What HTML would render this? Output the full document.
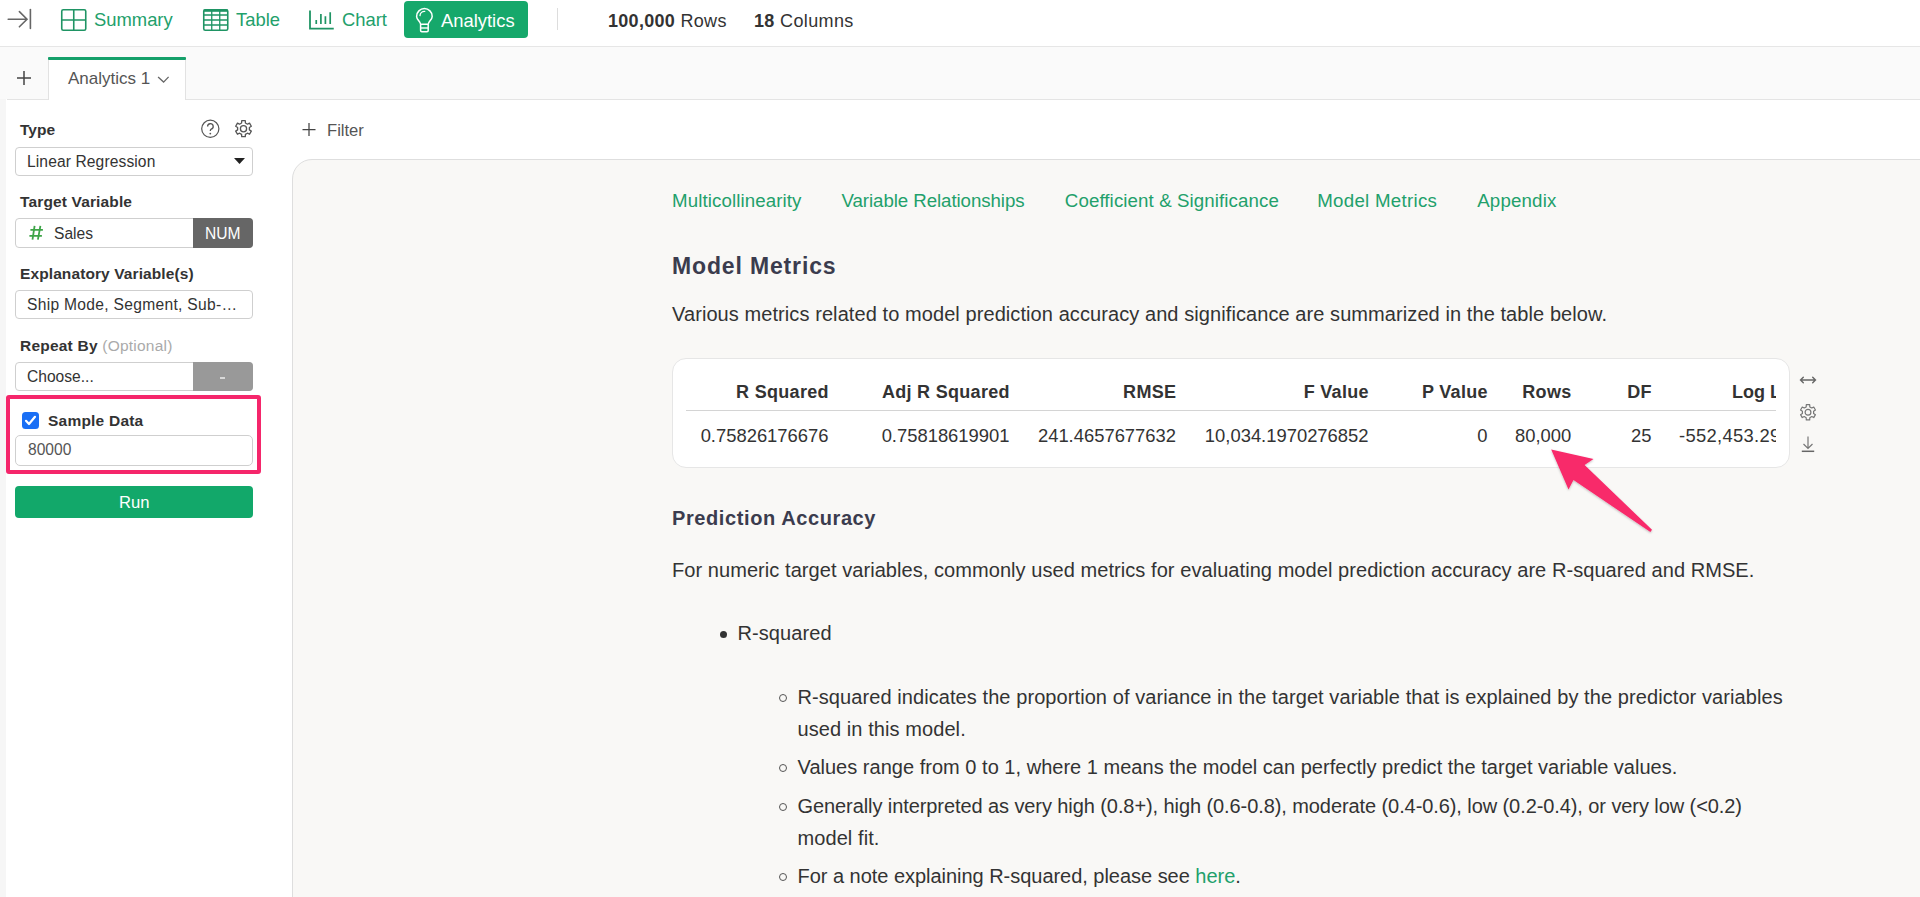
<!DOCTYPE html>
<html><head><meta charset="utf-8"><style>
html,body{-webkit-font-smoothing:antialiased;margin:0;padding:0;width:1920px;height:897px;overflow:hidden;background:#fff;position:relative;font-family:"Liberation Sans",sans-serif}
.t{position:absolute;white-space:nowrap}
.box{position:absolute;border:1px solid #cfcfcf;border-radius:4px;box-sizing:border-box;background:#fff}
</style></head><body>
<div style="position:absolute;left:0;top:0;width:1920px;height:46px;background:#fff;border-bottom:1px solid #e6e6e6"></div>
<svg style="position:absolute;left:0px;top:0px" width="40" height="40" viewBox="0 0 40 40">
<path d="M8.2 19.2H26.8M19.4 11.6L27 19.2L19.4 26.8" fill="none" stroke="#666" stroke-width="1.6" stroke-linecap="round"/>
<path d="M30.4 9.6V28.4" stroke="#666" stroke-width="1.6" stroke-linecap="round"/></svg>
<svg style="position:absolute;left:60px;top:8px" width="28" height="24" viewBox="0 0 28 24">
<rect x="1.75" y="1.75" width="24" height="20.5" rx="1.5" fill="none" stroke="#1f9464" stroke-width="1.6"/>
<path d="M13.75 1.75V22.25M1.75 12H25.75" stroke="#1f9464" stroke-width="1.6"/></svg>
<div class="t" style="left:94px;top:8.92px;font-size:18.4px;line-height:21px;color:#22a06b;font-weight:normal;letter-spacing:0px;">Summary</div>
<svg style="position:absolute;left:202px;top:8px" width="28" height="24" viewBox="0 0 28 24">
<rect x="1.75" y="1.75" width="24" height="20.5" rx="1.5" fill="none" stroke="#1f9464" stroke-width="1.6"/>
<path d="M1.75 2.6H25.75" stroke="#1f9464" stroke-width="2.4"/>
<path d="M9.75 1.75V22.25M17.75 1.75V22.25M1.75 7H25.75M1.75 12H25.75M1.75 17H25.75" stroke="#1f9464" stroke-width="1.3"/></svg>
<div class="t" style="left:236px;top:9.42px;font-size:18.4px;line-height:21px;color:#22a06b;font-weight:normal;letter-spacing:0px;">Table</div>
<svg style="position:absolute;left:308px;top:9px" width="28" height="22" viewBox="0 0 28 22">
<path d="M2 1.6V19.6H25.75" fill="none" stroke="#1f9464" stroke-width="1.8"/>
<path d="M8.25 10.9V15M12.9 5V15M17.4 7.3V15M22.2 3.2V15" stroke="#1f9464" stroke-width="1.7"/></svg>
<div class="t" style="left:342px;top:9.42px;font-size:18.4px;line-height:21px;color:#22a06b;font-weight:normal;letter-spacing:0px;">Chart</div>
<div style="position:absolute;left:404px;top:1px;width:124px;height:37px;background:#16a86b;border-radius:4px"></div>
<svg style="position:absolute;left:414px;top:6px" width="21" height="28" viewBox="0 0 21 28">
<path d="M6.6 18.2C6.6 15.6 2.6 13.6 2.6 10.4A7.8 7.8 0 0 1 18.2 10.4C18.2 13.6 14.2 15.6 14.2 18.2Z" fill="none" stroke="#fff" stroke-width="1.5" stroke-linejoin="round"/>
<path d="M6.6 18.2V24.6Q6.6 25.8 7.8 25.8H13Q14.2 25.8 14.2 24.6V18.2" fill="none" stroke="#fff" stroke-width="1.5"/>
<path d="M6.6 22H14.2" stroke="#fff" stroke-width="1.4"/>
<path d="M6 9.6A4.6 4.6 0 0 1 10.8 5.3" fill="none" stroke="#fff" stroke-width="1.3" stroke-linecap="round"/></svg>
<div class="t" style="left:441px;top:9.82px;font-size:18.4px;line-height:21px;color:#fff;font-weight:normal;letter-spacing:0px;">Analytics</div>
<div style="position:absolute;left:557px;top:8px;width:1px;height:22px;background:#ddd"></div>
<div class="t" style="left:608px;top:11.36px;font-size:18px;line-height:21px;color:#333;font-weight:normal;letter-spacing:0.3px;"><b>100,000</b> Rows</div>
<div class="t" style="left:754px;top:11.36px;font-size:18px;line-height:21px;color:#333;font-weight:normal;letter-spacing:0.36px;"><b>18</b> Columns</div>
<div style="position:absolute;left:0;top:47px;width:1920px;height:52px;background:#fafafa"></div>
<div style="position:absolute;left:7px;top:99px;width:1913px;height:1px;background:#e4e4e4"></div>
<div style="position:absolute;left:0;top:99px;width:6px;height:798px;background:#f6f6f6"></div>
<svg style="position:absolute;left:16px;top:70px" width="16" height="16" viewBox="0 0 16 16"><path d="M8 1V15M1 8H15" stroke="#444" stroke-width="1.5"/></svg>
<div style="position:absolute;left:48px;top:57px;width:138px;height:43px;background:#fff;border-left:1px solid #e2e2e2;border-right:1px solid #e2e2e2;box-sizing:border-box"></div>
<div style="position:absolute;left:48px;top:57px;width:138px;height:3px;background:#15a06a;border-radius:1px"></div>
<div class="t" style="left:68px;top:69.01px;font-size:17px;line-height:20px;color:#555;font-weight:normal;letter-spacing:0px;">Analytics 1</div>
<svg style="position:absolute;left:157px;top:75px" width="14" height="9" viewBox="0 0 14 9"><path d="M1.1 2L6.6 7.1L11.6 1.9" fill="none" stroke="#666" stroke-width="1.3"/></svg>
<div style="position:absolute;left:6px;top:100px;width:286px;height:797px;background:#fff"></div>
<div class="t" style="left:20px;top:121.43px;font-size:15.5px;line-height:18px;color:#333;font-weight:bold;letter-spacing:0px;">Type</div>
<svg style="position:absolute;left:200px;top:119px" width="21" height="20" viewBox="0 0 21 20">
<circle cx="10.3" cy="9.8" r="8.6" fill="none" stroke="#555" stroke-width="1.2"/>
<path d="M7.6 7.5A2.8 2.8 0 1 1 11.2 10.2C10.4 10.6 10.3 11 10.3 12" fill="none" stroke="#555" stroke-width="1.3"/>
<circle cx="10.3" cy="14.6" r="0.9" fill="#555"/></svg>
<svg style="position:absolute;left:233px;top:118px" width="22" height="22" viewBox="0 0 22 22">
<path fill="none" stroke="#555" stroke-width="1.3" stroke-linejoin="round" d="M8.59 5.01L8.71 2.70L12.29 2.70L12.41 5.01L14.47 6.20L16.54 5.15L18.32 8.25L16.38 9.51L16.38 11.89L18.32 13.15L16.54 16.25L14.47 15.20L12.41 16.39L12.29 18.70L8.71 18.70L8.59 16.39L6.53 15.20L4.46 16.25L2.68 13.15L4.62 11.89L4.62 9.51L2.68 8.25L4.46 5.15L6.53 6.20Z"/>
<circle cx="10.5" cy="10.7" r="3.1" fill="none" stroke="#555" stroke-width="1.3"/></svg>
<div class="box" style="left:15px;top:147px;width:238px;height:29px"></div>
<div class="t" style="left:27px;top:152.59px;font-size:15.6px;line-height:18px;color:#333;font-weight:normal;letter-spacing:0.11px;">Linear Regression</div>
<svg style="position:absolute;left:234px;top:158px" width="11" height="6" viewBox="0 0 11 6"><path d="M0 0H11L5.5 6Z" fill="#222"/></svg>
<div class="t" style="left:20px;top:193.13px;font-size:15.5px;line-height:18px;color:#333;font-weight:bold;letter-spacing:0.14px;">Target Variable</div>
<div class="box" style="left:15px;top:218px;width:238px;height:30px"></div>
<div style="position:absolute;left:193px;top:218px;width:60px;height:30px;background:#666;border-radius:0 4px 4px 0"></div>
<svg style="position:absolute;left:28px;top:224px" width="16" height="16" viewBox="0 0 16 16"><path d="M6.6 1.8L4.5 15.6M12.4 1.8L9.9 15.6M2.4 5.8H14.9M1.4 11.8H13.9" fill="none" stroke="#3da447" stroke-width="1.8"/></svg>
<div class="t" style="left:54px;top:224.59px;font-size:15.6px;line-height:18px;color:#333;font-weight:normal;letter-spacing:0px;">Sales</div>
<div class="t" style="left:205px;top:224.59px;font-size:15.6px;line-height:18px;color:#fff;font-weight:normal;letter-spacing:0px;">NUM</div>
<div class="t" style="left:20px;top:265.33px;font-size:15.5px;line-height:18px;color:#333;font-weight:bold;letter-spacing:0.1px;">Explanatory Variable(s)</div>
<div class="box" style="left:15px;top:290px;width:238px;height:29px"></div>
<div class="t" style="left:27px;top:295.99px;font-size:15.6px;line-height:18px;color:#333;font-weight:normal;letter-spacing:0.3px;">Ship Mode, Segment, Sub-…</div>
<div class="t" style="left:20px;top:336.63px;font-size:15.5px;line-height:18px;color:#333;font-weight:bold;letter-spacing:0.22px;">Repeat By <span style="font-weight:normal;color:#aaa">(Optional)</span></div>
<div class="box" style="left:15px;top:362px;width:238px;height:29px"></div>
<div style="position:absolute;left:193px;top:362px;width:60px;height:29px;background:#999;border-radius:0 4px 4px 0"></div>
<div style="position:absolute;left:220px;top:377px;width:5px;height:1.5px;background:#d8d8d8"></div>
<div class="t" style="left:27px;top:367.79px;font-size:15.6px;line-height:18px;color:#333;font-weight:normal;letter-spacing:0px;">Choose...</div>
<div style="position:absolute;left:6px;top:395px;width:255px;height:79px;border:4px solid #f5266b;border-radius:3px;box-sizing:border-box"></div>
<div style="position:absolute;left:21.5px;top:411.5px;width:17px;height:17px;background:#1a6ff5;border-radius:3.5px"></div>
<svg style="position:absolute;left:21.5px;top:411.5px" width="17" height="17" viewBox="0 0 17 17"><path d="M4 8.8L7 12L13 4.8" fill="none" stroke="#fff" stroke-width="2.2" stroke-linecap="round" stroke-linejoin="round"/></svg>
<div class="t" style="left:48px;top:411.53px;font-size:15.5px;line-height:18px;color:#333;font-weight:bold;letter-spacing:0.22px;">Sample Data</div>
<div class="box" style="left:15px;top:435px;width:238px;height:31px;border-radius:5px"></div>
<div class="t" style="left:28px;top:441.19px;font-size:15.6px;line-height:18px;color:#555;font-weight:normal;letter-spacing:0px;">80000</div>
<div style="position:absolute;left:15px;top:486px;width:238px;height:32px;background:#12a86a;border-radius:4px"></div>
<div class="t" style="left:119px;top:493.05px;font-size:16.6px;line-height:19px;color:#fff;font-weight:normal;letter-spacing:0px;">Run</div>
<svg style="position:absolute;left:301px;top:122px" width="16" height="15" viewBox="0 0 16 15"><path d="M8 1V14M1.5 7.5H14.5" stroke="#444" stroke-width="1.25"/></svg>
<div class="t" style="left:327px;top:120.55px;font-size:16.6px;line-height:19px;color:#555;font-weight:normal;letter-spacing:0px;">Filter</div>
<div style="position:absolute;left:292px;top:159px;width:1640px;height:760px;background:#f9f8f6;border:1px solid #dedede;border-top-left-radius:20px;box-sizing:border-box"></div>
<div class="t" style="left:672px;top:190.02px;font-size:18.7px;line-height:22px;color:#22a06b;font-weight:normal;letter-spacing:0.1px;">Multicollinearity</div>
<div class="t" style="left:841.5px;top:190.02px;font-size:18.7px;line-height:22px;color:#22a06b;font-weight:normal;letter-spacing:-0.07px;">Variable Relationships</div>
<div class="t" style="left:1064.8px;top:190.02px;font-size:18.7px;line-height:22px;color:#22a06b;font-weight:normal;letter-spacing:0.1px;">Coefficient &amp; Significance</div>
<div class="t" style="left:1317.2px;top:190.02px;font-size:18.7px;line-height:22px;color:#22a06b;font-weight:normal;letter-spacing:0.28px;">Model Metrics</div>
<div class="t" style="left:1477.2px;top:190.02px;font-size:18.7px;line-height:22px;color:#22a06b;font-weight:normal;letter-spacing:0.17px;">Appendix</div>
<div class="t" style="left:672px;top:252.78px;font-size:23px;line-height:26px;color:#3b3c4e;font-weight:bold;letter-spacing:0.85px;">Model Metrics</div>
<div class="t" style="left:672px;top:303.27px;font-size:20px;line-height:23px;color:#333;font-weight:normal;letter-spacing:0.08px;">Various metrics related to model prediction accuracy and significance are summarized in the table below.</div>
<div style="position:absolute;left:672px;top:358px;width:1118px;height:110px;background:#fff;border:1px solid #e6e6e6;border-radius:14px;box-sizing:border-box"></div>
<div style="position:absolute;left:686px;top:410px;width:1090px;height:1px;background:#d4d4d4"></div>
<div class="t" style="left:0px;top:381.86px;font-size:18px;line-height:21px;color:#333;font-weight:bold;letter-spacing:0.3px;width:828.8px;text-align:right">R Squared</div>
<div class="t" style="left:0px;top:424.72px;font-size:18.4px;line-height:21px;color:#333;font-weight:normal;letter-spacing:0px;width:828.5px;text-align:right">0.75826176676</div>
<div class="t" style="left:0px;top:381.86px;font-size:18px;line-height:21px;color:#333;font-weight:bold;letter-spacing:0.3px;width:1009.8px;text-align:right">Adj R Squared</div>
<div class="t" style="left:0px;top:424.72px;font-size:18.4px;line-height:21px;color:#333;font-weight:normal;letter-spacing:0px;width:1009.5px;text-align:right">0.75818619901</div>
<div class="t" style="left:0px;top:381.86px;font-size:18px;line-height:21px;color:#333;font-weight:bold;letter-spacing:0.3px;width:1176.3px;text-align:right">RMSE</div>
<div class="t" style="left:0px;top:424.72px;font-size:18.4px;line-height:21px;color:#333;font-weight:normal;letter-spacing:0px;width:1176px;text-align:right">241.4657677632</div>
<div class="t" style="left:0px;top:381.86px;font-size:18px;line-height:21px;color:#333;font-weight:bold;letter-spacing:0.3px;width:1368.8px;text-align:right">F Value</div>
<div class="t" style="left:0px;top:424.72px;font-size:18.4px;line-height:21px;color:#333;font-weight:normal;letter-spacing:0px;width:1368.5px;text-align:right">10,034.1970276852</div>
<div class="t" style="left:0px;top:381.86px;font-size:18px;line-height:21px;color:#333;font-weight:bold;letter-spacing:0.3px;width:1487.8px;text-align:right">P Value</div>
<div class="t" style="left:0px;top:424.72px;font-size:18.4px;line-height:21px;color:#333;font-weight:normal;letter-spacing:0px;width:1487.5px;text-align:right">0</div>
<div class="t" style="left:0px;top:381.86px;font-size:18px;line-height:21px;color:#333;font-weight:bold;letter-spacing:0.3px;width:1571.5px;text-align:right">Rows</div>
<div class="t" style="left:0px;top:424.72px;font-size:18.4px;line-height:21px;color:#333;font-weight:normal;letter-spacing:0px;width:1571.2px;text-align:right">80,000</div>
<div class="t" style="left:0px;top:381.86px;font-size:18px;line-height:21px;color:#333;font-weight:bold;letter-spacing:0.3px;width:1651.8px;text-align:right">DF</div>
<div class="t" style="left:0px;top:424.72px;font-size:18.4px;line-height:21px;color:#333;font-weight:normal;letter-spacing:0px;width:1651.5px;text-align:right">25</div>
<div style="position:absolute;left:1660px;top:0px;width:116px;height:500px;overflow:hidden">
<div class="t" style="left:72px;top:381.86px;font-size:18px;line-height:21px;color:#333;font-weight:bold;letter-spacing:0px;">Log Likelihood</div>
<div class="t" style="left:19px;top:424.72px;font-size:18.4px;line-height:21px;color:#333;font-weight:normal;letter-spacing:0.3px;">-552,453.2915</div>
</div>
<svg style="position:absolute;left:1798px;top:373px" width="20" height="14" viewBox="0 0 20 14">
<path d="M2.5 7H17.5M5.3 4.2L2.5 7L5.3 9.8M14.7 4.2L17.5 7L14.7 9.8" fill="none" stroke="#666" stroke-width="1.4" stroke-linecap="round"/></svg>
<svg style="position:absolute;left:1797px;top:401px" width="22" height="22" viewBox="0 0 22 22">
<path fill="none" stroke="#777" stroke-width="1.2" stroke-linejoin="round" d="M9.18 5.90L9.30 3.69L12.70 3.69L12.82 5.90L14.77 7.02L16.74 6.02L18.44 8.97L16.59 10.17L16.59 12.43L18.44 13.63L16.74 16.58L14.77 15.58L12.82 16.70L12.70 18.91L9.30 18.91L9.18 16.70L7.23 15.58L5.26 16.58L3.56 13.63L5.41 12.43L5.41 10.17L3.56 8.97L5.26 6.02L7.23 7.02Z"/>
<circle cx="11" cy="11.3" r="2.9" fill="none" stroke="#777" stroke-width="1.2"/></svg>
<svg style="position:absolute;left:1800px;top:435px" width="16" height="18" viewBox="0 0 16 18">
<path d="M8 1.5V13.5M3.5 9L8 13.5L12.5 9" fill="none" stroke="#777" stroke-width="1.2"/><path d="M1.8 16.3H14.2" stroke="#666" stroke-width="1.5"/></svg>
<svg style="position:absolute;left:0;top:0;overflow:visible" width="1920" height="897">
<defs><filter id="sh" x="-20%" y="-20%" width="140%" height="140%"><feDropShadow dx="0" dy="1" stdDeviation="1" flood-color="#000" flood-opacity="0.25"/></filter></defs>
<path filter="url(#sh)" d="M1551.2 449.5L1593.5 459L1584.6 465.1L1652 529.7L1650.4 532L1573.5 480.1L1568.5 489.6Z" fill="#f8296b"/></svg>
<div class="t" style="left:672px;top:506.87px;font-size:20px;line-height:23px;color:#3b3c4e;font-weight:bold;letter-spacing:0.6px;">Prediction Accuracy</div>
<div class="t" style="left:672px;top:558.55px;font-size:20.05px;line-height:23px;color:#333;font-weight:normal;letter-spacing:0.05px;">For numeric target variables, commonly used metrics for evaluating model prediction accuracy are R-squared and RMSE.</div>
<div style="position:absolute;left:719.5px;top:630.5px;width:7px;height:7px;border-radius:50%;background:#333"></div>
<div class="t" style="left:737.5px;top:622.37px;font-size:20px;line-height:23px;color:#333;font-weight:normal;letter-spacing:0.08px;">R-squared</div>
<div class="t" style="left:797.5px;top:685.77px;font-size:20px;line-height:23px;color:#333;font-weight:normal;letter-spacing:0.08px;">R-squared indicates the proportion of variance in the target variable that is explained by the predictor variables</div>
<div class="t" style="left:797.5px;top:717.97px;font-size:20px;line-height:23px;color:#333;font-weight:normal;letter-spacing:0.08px;">used in this model.</div>
<div class="t" style="left:797.5px;top:755.97px;font-size:20px;line-height:23px;color:#333;font-weight:normal;letter-spacing:0.02px;">Values range from 0 to 1, where 1 means the model can perfectly predict the target variable values.</div>
<div class="t" style="left:797.5px;top:794.57px;font-size:20px;line-height:23px;color:#333;font-weight:normal;letter-spacing:-0.084px;">Generally interpreted as very high (0.8+), high (0.6-0.8), moderate (0.4-0.6), low (0.2-0.4), or very low (&lt;0.2)</div>
<div class="t" style="left:797.5px;top:826.87px;font-size:20px;line-height:23px;color:#333;font-weight:normal;letter-spacing:0.08px;">model fit.</div>
<div class="t" style="left:797.5px;top:864.77px;font-size:20px;line-height:23px;color:#333;font-weight:normal;letter-spacing:-0.03px;">For a note explaining R-squared, please see <span style="color:#22a06b">here</span>.</div>
<div style="position:absolute;left:778.8px;top:693.9000000000001px;width:8px;height:8px;border-radius:50%;border:1.2px solid #555;box-sizing:border-box"></div>
<div style="position:absolute;left:778.8px;top:764.1px;width:8px;height:8px;border-radius:50%;border:1.2px solid #555;box-sizing:border-box"></div>
<div style="position:absolute;left:778.8px;top:802.7px;width:8px;height:8px;border-radius:50%;border:1.2px solid #555;box-sizing:border-box"></div>
<div style="position:absolute;left:778.8px;top:872.9000000000001px;width:8px;height:8px;border-radius:50%;border:1.2px solid #555;box-sizing:border-box"></div>
</body></html>
